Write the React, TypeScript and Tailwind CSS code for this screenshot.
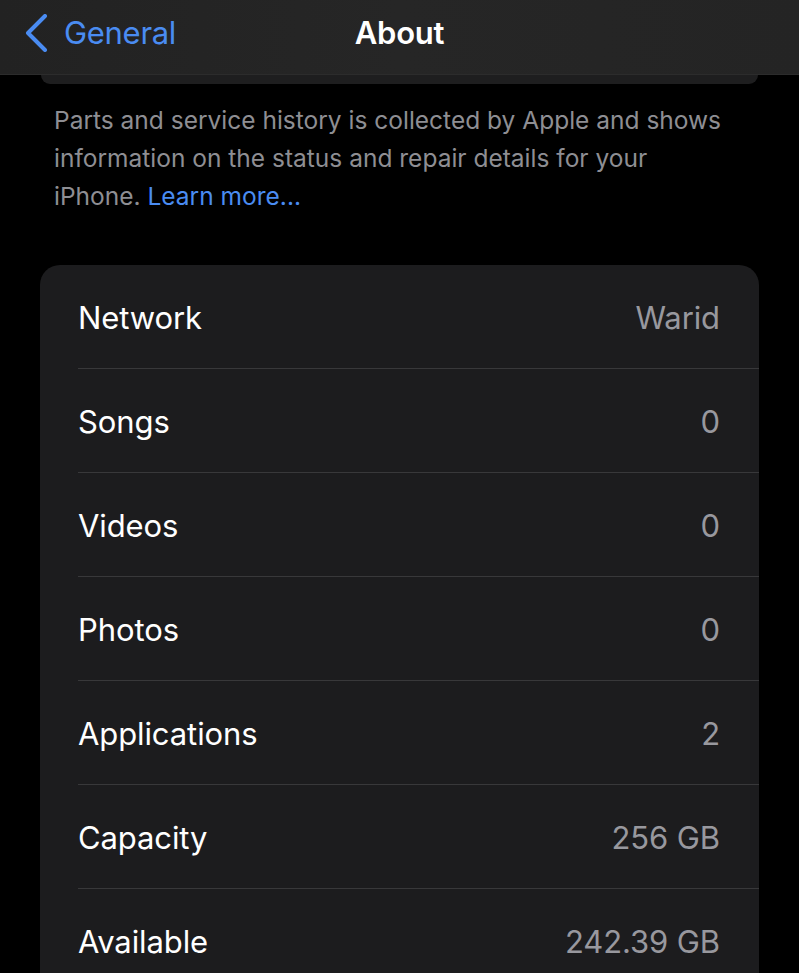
const rows = [
  { label: 'Network', value: 'Warid' },
  { label: 'Songs', value: '0' },
  { label: 'Videos', value: '0' },
  { label: 'Photos', value: '0' },
  { label: 'Applications', value: '2' },
  { label: 'Capacity', value: '256 GB' },
  { label: 'Available', value: '242.39 GB' },
];

export default function App() {
  return (
    <div
      className="min-h-[973px] w-full overflow-hidden bg-black text-white"
      style={{ fontFamily: 'Inter, "Noto Sans", sans-serif' }}
    >
      {/* Nav bar */}
      <div className="relative flex h-[75px] items-center pb-[8px] bg-gradient-to-r from-[#222222] via-[#262626] to-[#242424] border-b border-[#2c2c2c]">
        <div className="flex items-center pl-[24px] text-[#4a8cf2]">
          <svg width="26" height="38" viewBox="0 0 26 38" fill="none">
            <path d="M21 2 L4 19 L21 36" stroke="currentColor" strokeWidth="4" strokeLinecap="round" strokeLinejoin="round" />
          </svg>
          <span className="ml-[14px] text-[31px] tracking-[-0.3px]">General</span>
        </div>
        <div className="absolute inset-x-0 top-0 flex h-full items-center justify-center pb-[8px]">
          <span className="text-[31px] font-semibold tracking-[-0.2px]">About</span>
        </div>
      </div>

      {/* Bottom edge of the previous group, peeking out under the bar */}
      <div className="mx-[41px] h-[9px] rounded-b-[16px] bg-[#1e1e1f]" />

      {/* Footer text */}
      <p className="pl-[54px] pr-[64px] pt-[17px] text-[24.5px] leading-[38px] text-[#8e8e93]">
        Parts and service history is collected by Apple and shows information on the status and repair details for your
        iPhone. <span className="text-[#4a8cf2]">Learn more...</span>
      </p>

      {/* Info group */}
      <div className="mx-[40px] mt-[50px] rounded-[20px] bg-[#1c1c1e]">
        {rows.map((r, i) => (
          <div key={r.label} className="pl-[38px]">
            <div
              className={
                'flex h-[104px] items-center justify-between pr-[39px] pt-[3px] ' +
                (i < rows.length - 1 ? 'border-b border-[#38383a]' : '')
              }
            >
              <span className="text-[31px] tracking-[-0.1px]">{r.label}</span>
              <span className="text-[31px] tracking-[-0.1px] text-[#98989e]">{r.value}</span>
            </div>
          </div>
        ))}
      </div>
    </div>
  );
}
